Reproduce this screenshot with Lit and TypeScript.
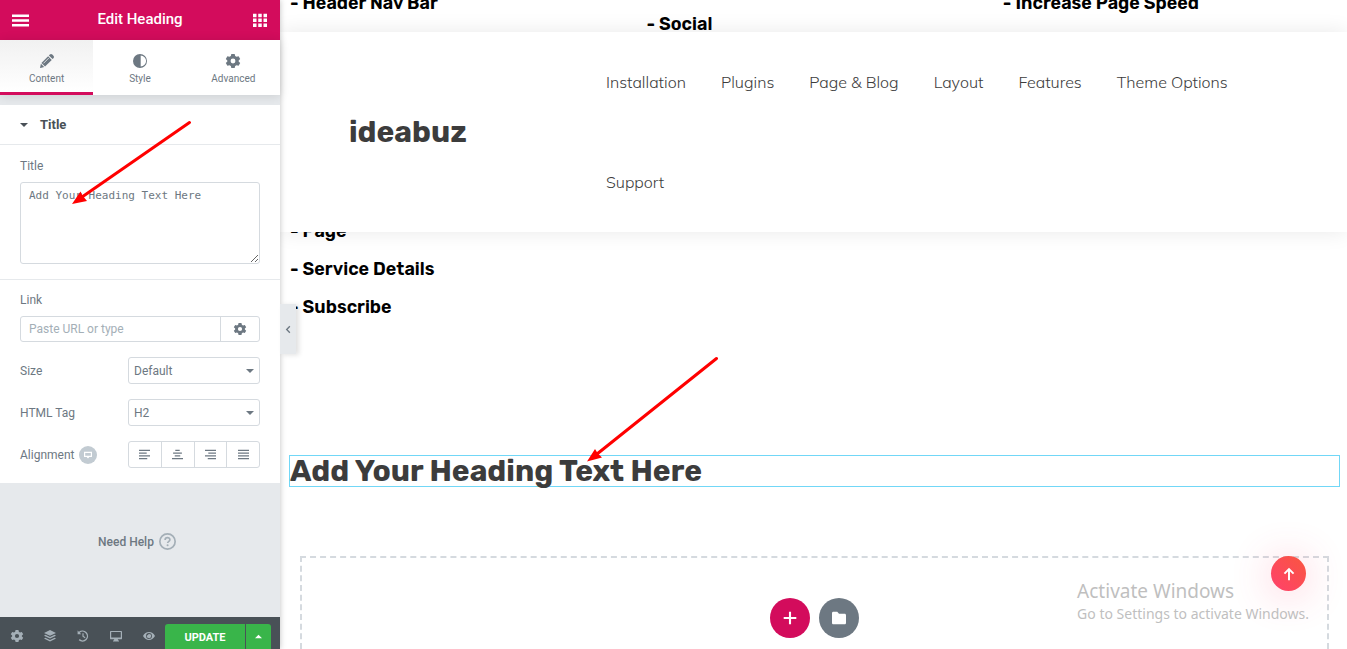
import { LitElement, html, css, svg } from "lit";
import { customElement, property } from "lit/decorators.js";

const icons: Record<string, unknown> = {
  menu: svg`<path d="M0 3h20v3H0zM0 8.500h20v3H0zM0 14h20v3H0z"/>`,
  grid: svg`<path d="M0 1h5v5H0zM7.500 1h5v5h-5zM15 1h5v5h-5zM0 8h5v5H0zM7.500 8h5v5h-5zM15 8h5v5h-5zM0 15h5v5H0zM7.500 15h5v5h-5zM15 15h5v5h-5z"/>`,
  pencil: svg`<path d="M11.600 3.200l5.200 5.200-9.600 9.600-5.200-5.200zM1.300 14l4.700 4.700-5.300 1.200c-.4.100-.7-.2-.6-.6zM12.700 2.100l1.300-1.300c1-1 2.600-1 3.600 0l1.600 1.600c1 1 1 2.600 0 3.600l-1.300 1.300z"/><path d="M5 13.300l7.500-7.500" stroke="#f8f8f8" stroke-width="1.100"/>`,
  contrast: svg`<path fill-rule="evenodd" d="M10 0a10 10 0 1 0 0 20 10 10 0 0 0 0-20zm1 2.300a7.700 7.700 0 0 1 0 15.400z"/>`,
  gear: svg`<path fill-rule="evenodd" d="M7.600 0h4.800l.7 3 1.900 1.100 3-.9 2.300 4-2.200 2.100v1.400l2.200 2.100-2.300 4-3-.9-1.900 1.100-.7 3H7.600l-.7-3L5 15.900l-3 .9-2.300-4 2.200-2.100V9.300L-.3 7.200l2.300-4 3 .9L6.900 3zM10 6.500a3.500 3.500 0 1 0 0 7 3.500 3.500 0 0 0 0-7z"/>`,
  layers: svg`<path d="M10 0l10 4.800-10 4.800L0 4.800zM2.400 8.100L10 11.700l7.600-3.600L20 9.400l-10 4.900L0 9.400zM2.400 12.900L10 16.500l7.600-3.600L20 14.200l-10 4.900-10-4.900z"/>`,
  history: svg`<path d="M1 1l2.100 2.100a9.300 9.300 0 1 1-.2 13.800l1.600-1.700a7 7 0 1 0 .2-10.500L7 7H1z"/><path d="M9 5.500h2v4.300l3.200 2.200-1.200 1.600-4-2.800z"/>`,
  desktop: svg`<path fill-rule="evenodd" d="M1.500 1.500h17c.8 0 1.500.7 1.500 1.500v11c0 .8-.7 1.500-1.500 1.500H13l.6 2H15v1.500H5v-1.500h1.400l.6-2H1.500C.7 15.500 0 14.800 0 14V3c0-.8.7-1.500 1.500-1.500zM2 3.500v9.200h16V3.500z"/>`,
  eye: svg`<path fill-rule="evenodd" d="M10 3.500c4.400 0 8 2.500 10 6.500-2 4-5.600 6.500-10 6.500S2 14 0 10c2-4 5.600-6.500 10-6.500zm0 1.600a4.900 4.900 0 1 0 0 9.800 4.900 4.900 0 0 0 0-9.800zm0 1.400a3.500 3.500 0 1 1-3.300 2.300 1.800 1.800 0 0 0 2.300-2.100c.3-.1.700-.2 1-.2z"/>`,
  down: svg`<path d="M0 5h20L10 15z"/>`,
  up: svg`<path d="M0 15h20L10 5z"/>`,
  left: svg`<path d="M13 3l-7 7 7 7" fill="none" stroke="currentColor" stroke-width="3"/>`,
  alignLeft: svg`<path d="M0 1h20v2H0zM0 6h14v2H0zM0 11h20v2H0zM0 16h15v2H0z" transform="translate(0 .5)"/>`,
  alignCenter: svg`<path d="M6 1h8v2H6zM2 6h16v2H2zM5 11h10v2H5zM0 16h20v2H0z" transform="translate(0 .5)"/>`,
  alignRight: svg`<path d="M0 1h20v2H0zM6 6h14v2H6zM0 11h20v2H0zM5 16h15v2H5z" transform="translate(0 .5)"/>`,
  alignFull: svg`<path d="M0 1h20v2H0zM0 6h20v2H0zM0 11h20v2H0zM0 16h20v2H0z" transform="translate(0 .5)"/>`,
  screen: svg`<path fill-rule="evenodd" d="M0 2h20v13h-7l-2 3H9l-2-3H0zM3 5v7h14V5z"/>`,
  help: svg`<circle cx="10" cy="10" r="9" fill="none" stroke="currentColor" stroke-width="2"/><path d="M7.200 8.100c0-3.600 5.700-3.500 5.600-.2 0 1.900-2.600 1.900-2.600 3.900" fill="none" stroke="currentColor" stroke-width="2"/><circle cx="10.100" cy="14.400" r="1.200"/>`,
  plus: svg`<path d="M8.500 1h3v7.500H19v3h-7.500V19h-3v-7.500H1v-3h7.500z"/>`,
  folder: svg`<path d="M2 1h5.500l2.500 3h8c1.100 0 2 .9 2 2v11c0 1.100-.9 2-2 2H2c-1.100 0-2-.9-2-2V3c0-1.100.9-2 2-2z"/>`,
  arrowUp: svg`<path d="M10 19V3M3.500 9.500L10 3l6.500 6.500" fill="none" stroke="currentColor" stroke-width="2.800"/>`,
};

@customElement("ui-icon")
class UiIcon extends LitElement {
  @property() name = "";
  static styles = css`
    :host { display: inline-flex; width: 12px; height: 12px; flex: none; }
    svg { width: 100%; height: 100%; fill: currentColor; overflow: visible; }
  `;
  render() {
    return html`<svg viewBox="0 0 20 20" aria-hidden="true">${icons[this.name]}</svg>`;
  }
}

@customElement("editor-panel")
class EditorPanel extends LitElement {
  static styles = css`
    :host {
      display: flex; flex-direction: column; position: relative; z-index: 5;
      background: #e6e9ec; color: #6d7882; min-height: 0;
      font: 12px/16px Roboto, sans-serif;
      box-shadow: 0 0 6px rgba(0, 0, 0, 0.25);
    }
    * { box-sizing: border-box; }
    button, input, select, textarea { font: inherit; color: inherit; margin: 0; }
    button { border: 0; background: none; padding: 0; cursor: pointer; display: flex; align-items: center; justify-content: center; }
    .bar { display: flex; align-items: center; justify-content: space-between; height: 40px; padding: 0 12px; background: #d30c5c; color: #fff; flex: none; }
    .bar h1 { margin: 0; font-size: 15px; line-height: 20px; font-weight: 500; padding-bottom: 2px; }
    .bar ui-icon { width: 17px; height: 17px; }
    .bar .apps { width: 14px; height: 14px; }
    .bar button { width: 16px; height: 24px; }
    .tabs { display: grid; grid-template-columns: repeat(3, 1fr); height: 55px; background: #fff; box-shadow: 0 1px 10px rgba(0, 0, 0, 0.12); flex: none; }
    .tab { flex-direction: column; gap: 4px; font-size: 10px; line-height: 14px; border-bottom: 3px solid transparent; padding-top: 7px; }
    .tab ui-icon { width: 14px; height: 14px; }
    .tab.on { background: linear-gradient(#f1f1f1, #fff); border-color: #d30c5c; }
    .section { background: #fff; margin-top: 10px; flex: none; }
    .fold { width: 100%; height: 40px; justify-content: flex-start; gap: 12px; padding: 0 20px; border-bottom: 1px solid #e6e9ec; font-size: 13px; font-weight: 700; color: #495157; }
    .fold ui-icon { width: 8px; height: 8px; }
    .field { padding: 13px 20px 15px; border-bottom: 1px solid #e6e9ec; }
    .field label { display: block; margin-bottom: 8px; }
    textarea { display: block; width: 100%; height: 82px; padding: 5px 8px; border: 1px solid #d5dadf; border-radius: 3px; background: #fff; font: 11px/16px "DejaVu Sans Mono", monospace; resize: vertical; outline: 0; }
    .rows { padding: 12px 20px 15px; display: flex; flex-direction: column; gap: 15px; }
    .rows label { line-height: 16px; }
    .link { display: flex; flex-direction: column; gap: 8px; }
    .group { display: flex; border: 1px solid #d5dadf; border-radius: 3px; height: 27px; background: #fff; }
    .link .group { height: 26px; }
    .group input { flex: 1; min-width: 0; border: 0; background: none; padding: 0 8px; outline: 0; }
    .group input::placeholder { color: #a4afb7; }
    .group button + button, .group input + button { border-left: 1px solid #d5dadf; }
    .group input + button { width: 39px; }
    .row { display: grid; grid-template-columns: 108px 1fr; align-items: center; }
    .pick { position: relative; display: flex; }
    .pick ui-icon { position: absolute; right: 6px; top: 10px; width: 8px; height: 8px; pointer-events: none; }
    select { appearance: none; width: 100%; height: 27px; border: 1px solid #d5dadf; border-radius: 3px; background: #fff; padding: 0 5px; outline: 0; }
    .align button { flex: 1; }
    .align ui-icon { width: 11px; height: 11px; }
    .name { display: flex; align-items: center; gap: 5px; }
    .badge { width: 18px; height: 18px; border-radius: 9px; background: #c2cbd2; color: #fff; }
    .badge ui-icon { width: 8px; height: 8px; }
    .help { display: flex; align-items: center; justify-content: center; gap: 5px; margin: 50px 6px 0 0; padding: 0; color: #6d7882; font-weight: 500; text-decoration: none; }
    .help ui-icon { width: 17px; height: 17px; color: #a4afb7; }
    .foot { margin-top: auto; height: 32px; background: #495157; display: flex; flex: none; padding-right: 9px; color: #a4afb7; }
    .foot .tool { flex: 1; padding-top: 6px; }
    .foot .save { margin-top: 7px; padding-top: 2px; width: 80px; background: #39b54a; color: #fff; font-weight: 700; font-size: 11px; border-radius: 3px 0 0 0; }
    .foot .more { margin: 7px 0 0 1px; width: 25px; background: #39b54a; color: #fff; border-radius: 0 3px 0 0; }
    .more ui-icon { width: 7px; height: 7px; }
    .collapse { position: absolute; left: 100%; top: 304px; width: 16px; height: 50px; background: #e6e9ec; color: #6d7882; box-shadow: 3px 1px 5px rgba(0, 0, 0, 0.12); }
    .collapse ui-icon { width: 9px; height: 9px; }
  `;
  render() {
    return html`
      <header class="bar">
        <button aria-label="Menu"><ui-icon name="menu"></ui-icon></button>
        <h1>Edit Heading</h1>
        <button aria-label="Widgets"><ui-icon class="apps" name="grid"></ui-icon></button>
      </header>
      <nav class="tabs">
        <button class="tab on"><ui-icon name="pencil"></ui-icon>Content</button>
        <button class="tab"><ui-icon name="contrast"></ui-icon>Style</button>
        <button class="tab"><ui-icon name="gear"></ui-icon>Advanced</button>
      </nav>
      <section class="section">
        <button class="fold"><ui-icon name="down"></ui-icon>Title</button>
        <div class="field">
          <label for="title">Title</label>
          <textarea id="title" spellcheck="false" .value=${"Add Your Heading Text Here"}></textarea>
        </div>
        <div class="rows">
          <div class="link">
            <label for="url">Link</label>
            <div class="group">
              <input id="url" type="text" placeholder="Paste URL or type" />
              <button aria-label="Link options"><ui-icon name="gear"></ui-icon></button>
            </div>
          </div>
          <div class="row">
            <label for="size">Size</label>
            <span class="pick"><select id="size"><option>Default</option></select><ui-icon name="down"></ui-icon></span>
          </div>
          <div class="row">
            <label for="tag">HTML Tag</label>
            <span class="pick"><select id="tag"><option>H2</option></select><ui-icon name="down"></ui-icon></span>
          </div>
          <div class="row">
            <span class="name"><span id="alignment">Alignment</span>
              <button class="badge" aria-label="Device"><ui-icon name="screen"></ui-icon></button></span>
            <div class="group align" role="group" aria-labelledby="alignment">
              <button aria-label="Left"><ui-icon name="alignLeft"></ui-icon></button>
              <button aria-label="Center"><ui-icon name="alignCenter"></ui-icon></button>
              <button aria-label="Right"><ui-icon name="alignRight"></ui-icon></button>
              <button aria-label="Justified"><ui-icon name="alignFull"></ui-icon></button>
            </div>
          </div>
        </div>
      </section>
      <a class="help" href="#">Need Help <ui-icon name="help"></ui-icon></a>
      <footer class="foot">
        ${["gear", "layers", "history", "desktop", "eye"].map(
          (n) => html`<button class="tool" aria-label=${n}><ui-icon name=${n}></ui-icon></button>`
        )}
        <button class="save">UPDATE</button>
        <button class="more" aria-label="Save options"><ui-icon name="up"></ui-icon></button>
      </footer>
      <button class="collapse" aria-label="Collapse panel"><ui-icon name="left"></ui-icon></button>
    `;
  }
}

@customElement("page-preview")
class PagePreview extends LitElement {
  static styles = css`
    :host { display: flex; flex-direction: column; position: relative; overflow: hidden; min-width: 0; background: #fff; }
    * { box-sizing: border-box; }
    .cols { display: grid; grid-template-columns: 29fr 29fr 28fr; height: 32px; padding-left: 10px; flex: none; }
    .item { margin: 0; font: 600 18px/38px Rubik, Inter, sans-serif; color: #000; }
    .cols .item { margin-top: -16px; }
    .cols .low { margin-top: 5px; }
    .site { position: relative; z-index: 1; display: grid; grid-template-columns: 257px 1fr; align-items: center; padding: 0 60px 0 69px; background: #fff; box-shadow: 0 0 20px rgba(0, 0, 0, 0.09); flex: none; }
    .logo { font: 700 30px/40px Rubik, Inter, sans-serif; color: #3c3c3c; text-decoration: none; }
    .menu { display: flex; flex-wrap: wrap; column-gap: 35px; }
    .menu a { font: 300 16px/100px Mulish, "Open Sans", sans-serif; color: #3c3c3c; text-decoration: none; }
    .list { margin: -20px 0 129px 10px; flex: none; }
    .heading { margin: 0 7px 69px 9px; border: 1px solid #71d7f7; font: 700 30px/30px Rubik, Inter, sans-serif; color: #3c3c3c; flex: none; }
    .drop { flex: 1; margin: 0 18px 0 20px; border: 2px dashed #d5dadf; border-bottom: 0; padding-top: 40px; display: flex; justify-content: center; gap: 9px; }
    button { border: 0; padding: 0; color: #fff; display: flex; align-items: center; justify-content: center; flex: none; }
    .round { width: 40px; height: 40px; border-radius: 50%; background: #d30c5c; }
    .round.grey { background: #6d7882; }
    .round ui-icon { width: 14px; height: 14px; }
    .totop { position: absolute; right: 41px; bottom: 58px; width: 35px; height: 35px; border-radius: 50%; background: linear-gradient(45deg, #ff416c, #f9563f); box-shadow: 0 3px 40px rgba(255, 65, 108, 0.3); }
    .totop ui-icon { width: 14px; height: 14px; }
    .mark { position: absolute; right: 38px; bottom: 25px; font: 14px/20px "Noto Sans", sans-serif; color: #bfbfbf; }
    .mark b { display: block; font-weight: 400; font-size: 19px; line-height: 26px; }
  `;
  render() {
    return html`
      <div class="cols">
        <p class="item">- Header Nav Bar</p>
        <p class="item low">- Social</p>
        <p class="item">- Increase Page Speed</p>
      </div>
      <header class="site">
        <a class="logo" href="#">ideabuz</a>
        <nav class="menu">
          ${["Installation", "Plugins", "Page & Blog", "Layout", "Features", "Theme Options", "Support"].map(
            (t) => html`<a href="#">${t}</a>`
          )}
        </nav>
      </header>
      <div class="list">
        <p class="item">- Page</p>
        <p class="item">- Service Details</p>
        <p class="item">- Subscribe</p>
      </div>
      <h2 class="heading">Add Your Heading Text Here</h2>
      <div class="drop">
        <button class="round" aria-label="Add section"><ui-icon name="plus"></ui-icon></button>
        <button class="round grey" aria-label="Add template"><ui-icon name="folder"></ui-icon></button>
      </div>
      <button class="totop" aria-label="Back to top"><ui-icon name="arrowUp"></ui-icon></button>
      <div class="mark"><b>Activate Windows</b>Go to Settings to activate Windows.</div>
    `;
  }
}

@customElement("app-root")
class AppRoot extends LitElement {
  static styles = css`
    :host { display: grid; grid-template-columns: 280px 1fr; height: 100vh; position: relative; overflow: hidden; }
    .arrows { position: absolute; left: 0; top: 0; z-index: 10; width: 720px; height: 470px; pointer-events: none; }
  `;
  render() {
    return html`
      <editor-panel></editor-panel>
      <page-preview></page-preview>
      <svg class="arrows" viewBox="0 0 720 470" fill="#f00" aria-hidden="true">
        <path d="M189.500 122.500L82 197M716.500 358.500L597 454" fill="none" stroke="#f00" stroke-width="3" stroke-linecap="round"/>
        <path d="M72 204L80.500 191.500L82.500 195.500L87 201ZM587 461.500L595 449L597.500 453L602 457.500Z"/>
      </svg>
    `;
  }
}
